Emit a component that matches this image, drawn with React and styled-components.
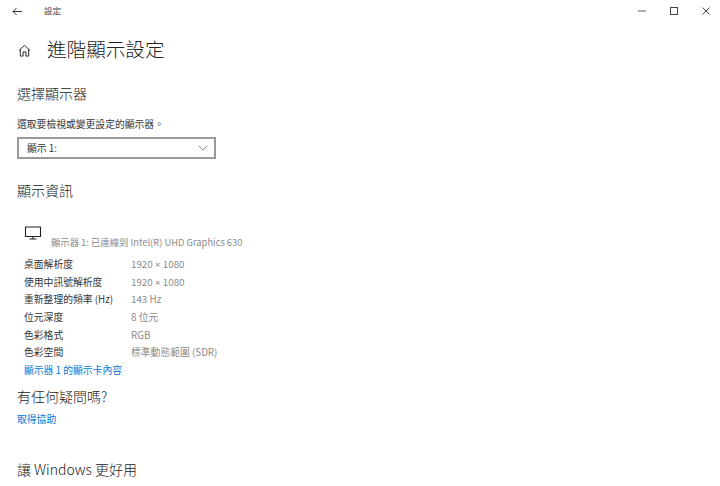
import React from "react";
import styled, { createGlobalStyle } from "styled-components";

const FONT = `"Noto Sans CJK TC", "Open Sans", sans-serif`;

const Times = styled.span`
  font-family: "Open Sans", sans-serif;
`;

const resolution = (
  <>
    1920 <Times>×</Times> 1080
  </>
);

const infoRows = [
  { id: 1, label: "桌面解析度", value: resolution },
  { id: 2, label: "使用中訊號解析度", value: resolution },
  { id: 3, label: "重新整理的頻率 (Hz)", value: "143 Hz" },
  { id: 4, label: "位元深度", value: "8 位元" },
  { id: 5, label: "色彩格式", value: "RGB" },
  { id: 6, label: "色彩空間", value: "標準動態範圍 (SDR)" },
];

export default function App() {
  return (
    <Page>
      <GlobalStyle />
      <TitleBar>
        <TitleLeft>
          <BackIcon viewBox="0 0 12 10">
            <path d="M11 5H1M5 1 1 5l4 4" />
          </BackIcon>
          <AppName>設定</AppName>
        </TitleLeft>
        <WindowButtons>
          <WindowIcon viewBox="0 0 10 10">
            <path d="M1 5h8" stroke="#8a8a8a" strokeWidth="1.4" />
          </WindowIcon>
          <WindowIcon viewBox="0 0 10 10">
            <rect x="1.5" y="1.5" width="7" height="7" />
          </WindowIcon>
          <WindowIcon viewBox="0 0 10 10">
            <path d="M1.5 1.5l7 7M8.5 1.5l-7 7" />
          </WindowIcon>
        </WindowButtons>
      </TitleBar>
      <Content>
        <PageHeader>
          <HomeIcon viewBox="0 0 14 14">
            <path d="M1 7 7 1.5 13 7M2.5 5.8V13H5.5V8.5H8.5V13H11.5V5.8" />
          </HomeIcon>
          <PageTitle>進階顯示設定</PageTitle>
        </PageHeader>
        <SectionTitle>選擇顯示器</SectionTitle>
        <FieldLabel>選取要檢視或變更設定的顯示器。</FieldLabel>
        <Select>
          <span>顯示 1:</span>
          <ChevronIcon viewBox="0 0 12 7">
            <path d="M1 1l5 5 5-5" />
          </ChevronIcon>
        </Select>
        <InfoTitle>顯示資訊</InfoTitle>
        <InfoBlock>
          <MonitorRow>
            <MonitorIcon viewBox="0 0 18 14">
              <path d="M1.5 1h15v9.5h-15zM9 10.5V13M5.5 13h7" />
            </MonitorIcon>
            <MonitorName>顯示器 1: 已連線到 Intel(R) UHD Graphics 630</MonitorName>
          </MonitorRow>
          {infoRows.map((row) => (
            <InfoRow key={row.id}>
              <InfoLabel>{row.label}</InfoLabel>
              <InfoValue>{row.value}</InfoValue>
            </InfoRow>
          ))}
          <InfoLink>顯示器 1 的顯示卡內容</InfoLink>
        </InfoBlock>
        <HelpTitle>有任何疑問嗎?</HelpTitle>
        <HelpLink>取得協助</HelpLink>
        <BetterTitle>讓 Windows 更好用</BetterTitle>
      </Content>
    </Page>
  );
}

const GlobalStyle = createGlobalStyle`
  html, body {
    margin: 0;
    background: #fff;
  }
  body {
    font-family: ${FONT};
    overflow: hidden;
  }
`;

const Page = styled.div`
  width: 720px;
  height: 486px;
  overflow: hidden;
  background: #fff;
  color: #1a1a1a;
`;

const TitleBar = styled.div`
  height: 22px;
  display: flex;
  align-items: center;
  justify-content: space-between;
`;

const TitleLeft = styled.div`
  display: flex;
  align-items: center;
  padding-left: 12px;
`;

const BackIcon = styled.svg`
  width: 11px;
  height: 9px;
  fill: none;
  stroke: #222;
  stroke-width: 1;
`;

const AppName = styled.span`
  margin: -2px 0 0 21px;
  font-size: 8.5px;
  line-height: 22px;
  color: #444;
`;

const WindowButtons = styled.div`
  display: flex;
  gap: 22px;
  padding-right: 9px;
`;

const WindowIcon = styled.svg`
  width: 10px;
  height: 10px;
  fill: none;
  stroke: #444;
  stroke-width: 1;
`;

const Content = styled.div`
  padding: 0 0 0 17px;
`;

const PageHeader = styled.div`
  height: 32px;
  margin-top: 11px;
  display: flex;
  align-items: center;
`;

const HomeIcon = styled.svg`
  width: 13px;
  height: 13px;
  margin-top: 2px;
  margin-left: 1px;
  fill: none;
  stroke: #222;
  stroke-width: 1;
`;

const PageTitle = styled.h1`
  margin: 0 0 0 16px;
  font-size: 19.6px;
  font-weight: 300;
  line-height: 32px;
  color: #222;
`;

const SectionTitle = styled.h2`
  margin: 17px 0 0;
  font-size: 14px;
  font-weight: 300;
  line-height: 22px;
  color: #222;
`;

const FieldLabel = styled.div`
  margin-top: 13px;
  font-size: 9.8px;
  line-height: 14px;
  color: #333;
`;

const Select = styled.div`
  box-sizing: border-box;
  width: 199px;
  height: 22px;
  margin-top: 6px;
  padding: 0 6px 0 8px;
  border: 2px solid #999;
  display: flex;
  align-items: center;
  justify-content: space-between;
  font-size: 9.8px;
  color: #333;
`;

const ChevronIcon = styled.svg`
  width: 10px;
  height: 6px;
  fill: none;
  stroke: #666;
  stroke-width: 1;
`;

const InfoTitle = styled(SectionTitle)`
  margin-top: 20px;
`;

const InfoBlock = styled.div`
  margin-top: 24px;
  padding-left: 7px;
`;

const MonitorRow = styled.div`
  height: 25px;
  margin-bottom: 5px;
  position: relative;
  padding-left: 27px;
  display: flex;
  align-items: flex-end;
`;

const MonitorIcon = styled.svg`
  position: absolute;
  left: 0;
  top: 1px;
  width: 18px;
  height: 14px;
  fill: none;
  stroke: #222;
  stroke-width: 1.1;
`;

const MonitorName = styled.span`
  font-size: 9.35px;
  line-height: 16px;
  color: #8a8a8a;
`;

const InfoRow = styled.div`
  height: 17.7px;
  display: flex;
  align-items: center;
  font-size: 9.8px;
`;

const InfoLabel = styled.span`
  width: 107px;
  color: #333;
`;

const InfoValue = styled.span`
  color: #8a8a8a;
`;

const InfoLink = styled.div`
  height: 17px;
  display: flex;
  align-items: center;
  font-size: 9.8px;
  color: #0078d7;
`;

const HelpTitle = styled(SectionTitle)`
  margin-top: 7px;
`;

const HelpLink = styled.div`
  margin-top: 5px;
  font-size: 9.8px;
  line-height: 14px;
  color: #0078d7;
`;

const BetterTitle = styled(SectionTitle)`
  margin-top: 32px;
`;
